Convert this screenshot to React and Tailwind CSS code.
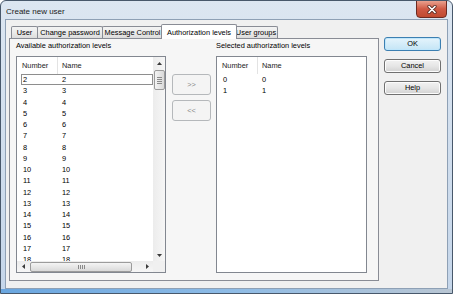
import React from "react";

const leftRows = [2, 3, 4, 5, 6, 7, 8, 9, 10, 11, 12, 13, 14, 15, 16, 17, 18];
const rightRows = [0, 1];

function Arrow({ dir }) {
  // tiny scrollbar arrow glyph
  const paths = {
    up: "M0 3 L2.5 0 L5 3 Z",
    down: "M0 0 L5 0 L2.5 3 Z",
    left: "M3 0 L3 5 L0 2.5 Z",
    right: "M0 0 L3 2.5 L0 5 Z",
  };
  const horiz = dir === "left" || dir === "right";
  return (
    <svg width={horiz ? 3 : 5} height={horiz ? 5 : 3} viewBox={horiz ? "0 0 3 5" : "0 0 5 3"}>
      <path d={paths[dir]} fill="#3a3a3a" />
    </svg>
  );
}

function ListView({ rows, focusFirst, withScroll }) {
  return (
    <div className="h-[217px] border border-[#828790] bg-white flex flex-col">
      <div className="flex-1 flex min-h-0">
        <div className="flex-1 overflow-hidden">
          <div className="h-[17px] flex items-center text-[#222]">
            <div className="w-[41px] pl-[5px] h-full flex items-center border-r border-[#e3e3e3]">Number</div>
            <div className="pl-[4px]">Name</div>
          </div>
          {rows.map((r, i) => (
            <div
              key={r}
              className={`h-[11.25px] ml-[4px] flex items-center border ${
                focusFirst && i === 0 ? "border-[#8e8e8e]" : "border-transparent"
              }`}
            >
              <div className="w-[40px] pl-[1px]">{r}</div>
              <div>{r}</div>
            </div>
          ))}
        </div>
        {withScroll && (
          <div className="w-[12px] bg-linear-to-r from-[#ececec] to-[#f6f6f6] flex flex-col items-center">
            <div className="h-[12px] w-full flex items-center justify-center">
              <Arrow dir="up" />
            </div>
            <div className="mt-[1px] h-[20px] w-[11px] rounded-[2px] border border-[#9b9b9b] bg-linear-to-r from-[#f4f4f4] to-[#d9d9d9] flex flex-col items-center justify-center gap-[1px]">
              <div className="w-[5px] h-px bg-[#8a8a8a]" />
              <div className="w-[5px] h-px bg-[#8a8a8a]" />
              <div className="w-[5px] h-px bg-[#8a8a8a]" />
              <div className="w-[5px] h-px bg-[#8a8a8a]" />
            </div>
            <div className="flex-1" />
            <div className="h-[12px] w-full flex items-center justify-center">
              <Arrow dir="down" />
            </div>
          </div>
        )}
      </div>
      {withScroll && (
        <div className="h-[11px] flex">
          <div className="flex-1 flex items-center bg-linear-to-b from-[#ececec] to-[#f6f6f6]">
            <div className="w-[12px] h-full flex items-center justify-center">
              <Arrow dir="left" />
            </div>
            <div className="ml-[1px] w-[102px] h-[10px] rounded-[2px] border border-[#9b9b9b] bg-linear-to-b from-[#f4f4f4] to-[#d9d9d9] flex items-center justify-center gap-[1px]">
              <div className="w-px h-[4px] bg-[#8a8a8a]" />
              <div className="w-px h-[4px] bg-[#8a8a8a]" />
              <div className="w-px h-[4px] bg-[#8a8a8a]" />
              <div className="w-px h-[4px] bg-[#8a8a8a]" />
            </div>
            <div className="flex-1" />
            <div className="w-[12px] h-full flex items-center justify-center">
              <Arrow dir="right" />
            </div>
          </div>
          <div className="w-[12px] bg-[#f0f0f0]" />
        </div>
      )}
    </div>
  );
}

function Tab({ label, width, active }) {
  if (active) {
    return (
      <div
        className="h-[15px] -mx-[2px] -mb-px z-10 relative bg-white border-l border-t border-r border-[#898c95] rounded-t-[2px] flex items-start justify-center pt-[2px]"
        style={{ width }}
      >
        {label}
      </div>
    );
  }
  return (
    <div
      className="h-[12px] -ml-px first:ml-0 bg-linear-to-b from-[#f3f3f3] via-[#ebebeb] to-[#dcdcdc] border-l border-t border-r border-[#898c95] rounded-t-[2px] flex items-center justify-center"
      style={{ width }}
    >
      {label}
    </div>
  );
}

function WinButton({ children, primary }) {
  return (
    <div
      className={`h-[14px] rounded-[3px] border flex items-center justify-center ${
        primary
          ? "border-[#3c7fb1] bg-linear-to-b from-[#e5f4fc] to-[#c4e5f6] shadow-[inset_0_0_0_1px_#bfe6fb]"
          : "border-[#707070] bg-linear-to-b from-[#f2f2f2] via-[#e6e6e6] to-[#d2d2d2] shadow-[inset_0_0_0_1px_#fcfcfc]"
      }`}
    >
      {children}
    </div>
  );
}

function MoveButton({ children }) {
  return (
    <div className="h-[21px] rounded-[3px] border border-[#b5b8bb] bg-[#f4f4f4] flex items-center justify-center text-[#8a8a8a]">
      {children}
    </div>
  );
}

export default function App() {
  return (
    <div className="w-[453px] h-[294px] overflow-hidden rounded-t-[6px] border border-[#48586b] bg-linear-to-b from-[#dce6f1] to-[#c5d6ea] flex flex-col font-['Liberation_Sans',Arial,sans-serif] text-[7.4px] text-black">
      {/* title bar */}
      <div className="h-[18px] flex items-start justify-between pl-[5px] pr-[5px]">
        <div className="pt-[5px] text-[8px] text-[#1a1a1a]">Create new user</div>
        <div className="-mt-px w-[31px] h-[18px] rounded-b-[4px] border border-[#6b2a22] bg-linear-to-b from-[#e9a08e] via-[#cf5944] to-[#c04a30] flex items-center justify-center">
          <svg width="10" height="9" viewBox="0 0 10 9">
            <path d="M2 1.5 L8 7.5 M8 1.5 L2 7.5" stroke="#5a2a22" strokeWidth="3.2" strokeLinecap="round" />
            <path d="M2 1.5 L8 7.5 M8 1.5 L2 7.5" stroke="#ffffff" strokeWidth="1.7" strokeLinecap="round" />
          </svg>
        </div>
      </div>

      {/* client area */}
      <div className="flex-1 mx-[4px] border border-[#8ea0b5] bg-[#f0f0f0] flex px-[3px] pt-[3px] pb-[7px] min-h-0">
        {/* tab control */}
        <div className="w-[370px] flex flex-col">
          <div className="h-[15px] flex items-end pl-[2px]">
            <Tab label="User" width={27} />
            <Tab label="Change password" width={66} />
            <Tab label="Message Control" width={61} />
            <Tab label="Authorization levels" width={76} active />
            <Tab label="User groups" width={44} />
          </div>
          <div className="flex-1 border border-[#898c95] bg-[#f6f6f6] flex pl-[6px] pt-[2px]">
            <div className="w-[150px] flex flex-col">
              <div className="h-[10px] leading-[10px]">Available authorization levels</div>
              <div className="mt-[5px]">
                <ListView rows={leftRows} focusFirst withScroll />
              </div>
            </div>
            <div className="w-[39px] ml-[6px] mt-[33px] flex flex-col gap-[5px]">
              <MoveButton>&gt;&gt;</MoveButton>
              <MoveButton>&lt;&lt;</MoveButton>
            </div>
            <div className="w-[151px] ml-[5px] flex flex-col">
              <div className="h-[10px] leading-[10px]">Selected authorization levels</div>
              <div className="mt-[5px]">
                <ListView rows={rightRows} />
              </div>
            </div>
          </div>
        </div>

        {/* dialog buttons */}
        <div className="w-[57px] ml-[5px] mt-[14px] flex flex-col gap-[8px]">
          <WinButton primary>OK</WinButton>
          <WinButton>Cancel</WinButton>
          <WinButton>Help</WinButton>
        </div>
      </div>

      {/* bottom frame */}
      <div className="h-[4px] bg-linear-to-r from-[#6aa6df] via-[#8dbbe6] to-[#b9c6d3]" />
    </div>
  );
}
